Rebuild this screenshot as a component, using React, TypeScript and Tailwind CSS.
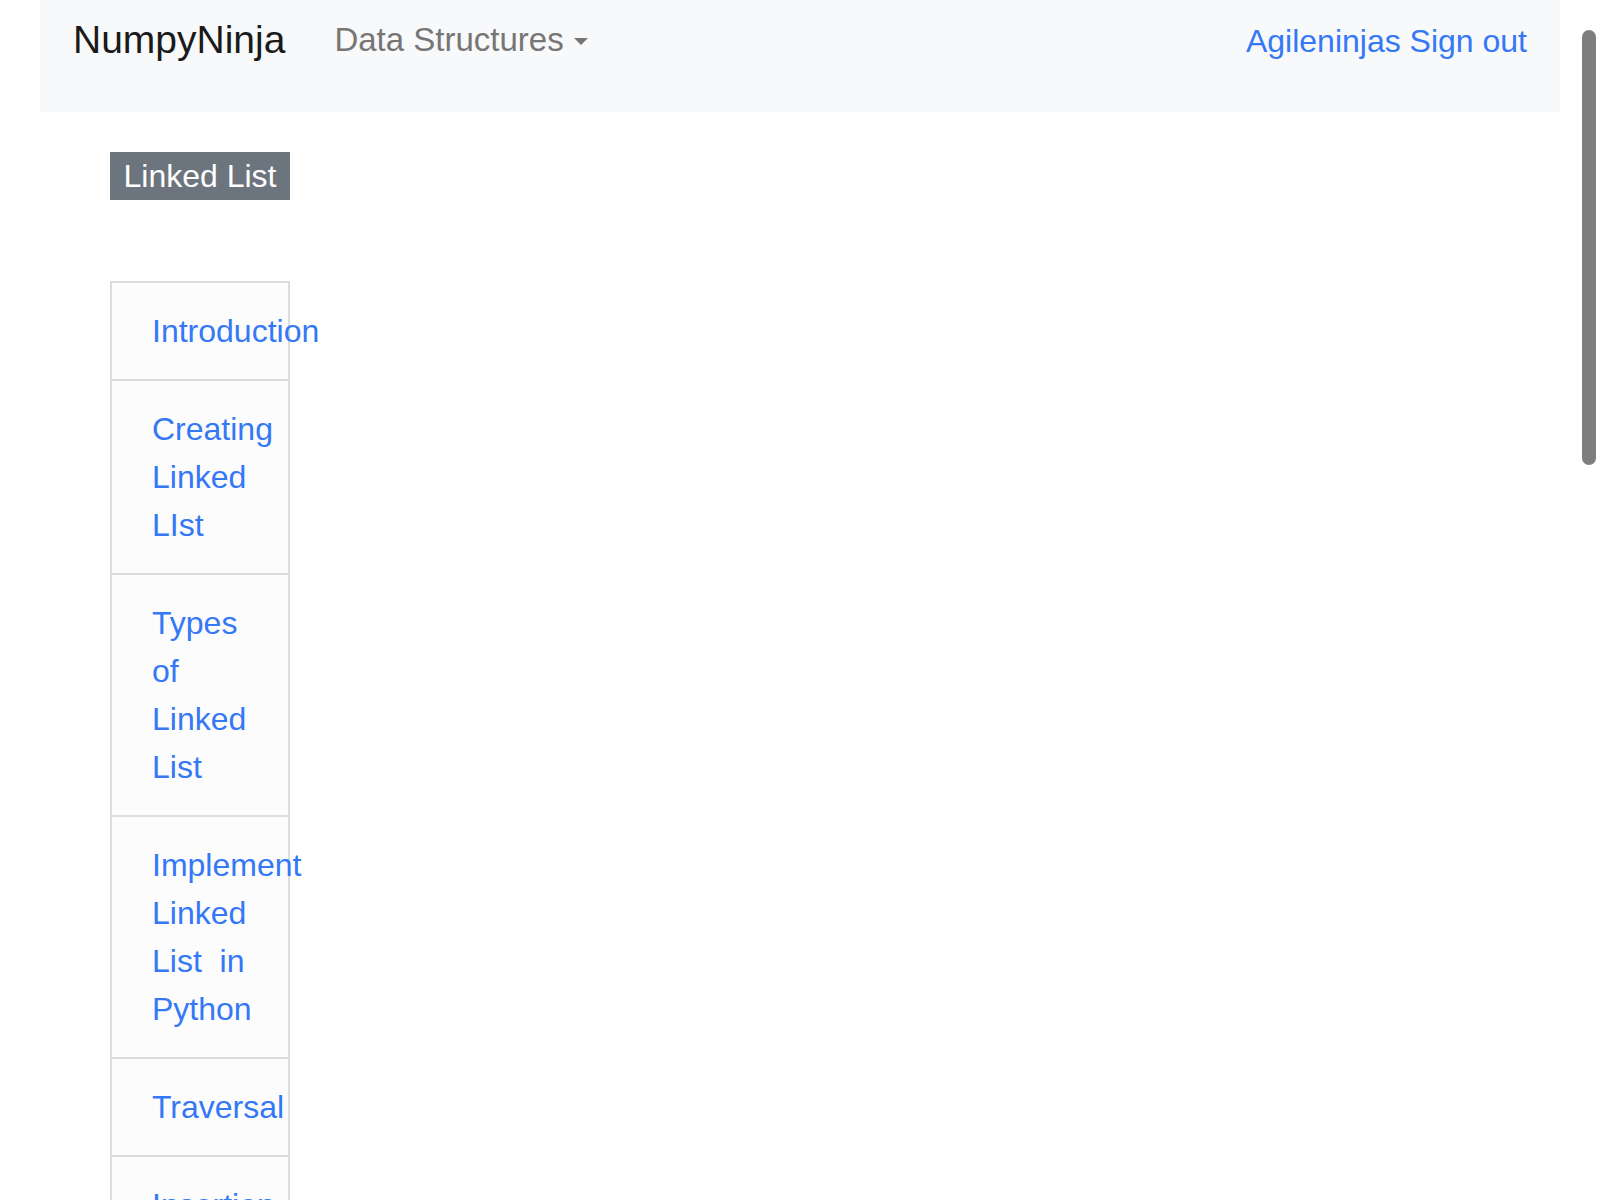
import React from "react";

const topics: string[][] = [
  ["Introduction"],
  ["Creating", "Linked", "LIst"],
  ["Types", "of", "Linked", "List"],
  ["Implement", "Linked", "List\u00a0 in", "Python"],
  ["Traversal"],
  ["Insertion"],
  ["Deletion"],
];

const App = () => {
  return (
    <div className="relative h-[1200px] overflow-hidden bg-white font-['Liberation_Sans',Arial,sans-serif]">
      {/* navbar */}
      <nav className="mx-[40px] flex h-[112px] items-start justify-between bg-[#f8f9fa] px-[33px]">
        <div className="flex items-start">
          <a className="mt-[11px] text-[39px] leading-[58px] text-[#1a1a1a]">NumpyNinja</a>
          <div className="ml-[49px] mt-[16px] flex items-center text-[33px] leading-[48px] text-[#767676]">
            <span>Data Structures</span>
            <span className="ml-[10px] mt-[2px] h-0 w-0 border-x-[7px] border-t-[7px] border-x-transparent border-t-[#767676]" />
          </div>
        </div>
        <a className="mt-[17px] text-[32px] leading-[48px] text-[#3478f6]">Agileninjas Sign out</a>
      </nav>

      {/* content */}
      <div className="pl-[110px] pt-[40px]">
        <div className="w-[180px] bg-[#6c757d] text-center text-[32px] leading-[48px] text-white">
          Linked List
        </div>

        <div className="mt-[81px] w-[180px] border-2 border-[#dcdcdc] bg-[#fcfcfc]">
          {topics.map((lines, i) => (
            <div
              key={i}
              className={`py-[24px] pl-[40px] pr-[16px] ${i > 0 ? "border-t-2 border-[#dcdcdc]" : ""}`}
            >
              {lines.map((line, j) => (
                <div key={j} className="whitespace-pre text-[32px] leading-[48px] text-[#3478f6]">
                  {line}
                </div>
              ))}
            </div>
          ))}
        </div>
      </div>

      {/* overlay scrollbar */}
      <div className="absolute right-[4px] top-[30px] h-[435px] w-[14px] rounded-full bg-[#7f7f7f]" />
    </div>
  );
};

export default App;
